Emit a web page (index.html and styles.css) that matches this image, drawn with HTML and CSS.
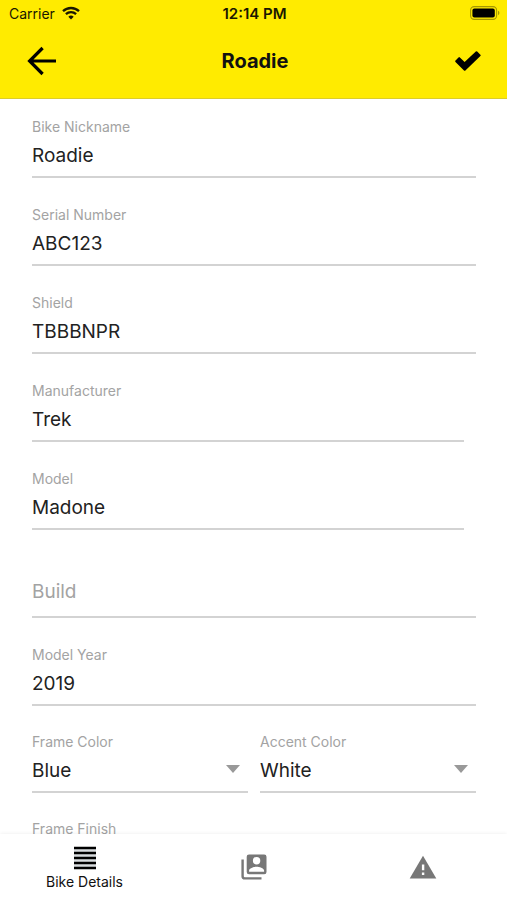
FILE: index.html
```html
<!DOCTYPE html>
<html lang="en">
<head>
<meta charset="utf-8">
<meta name="viewport" content="width=device-width, initial-scale=1">
<title>Roadie</title>
<link rel="stylesheet" href="styles.css">
</head>
<body>
<header class="header">
  <div class="status">
    <div class="carrier">
      <span>Carrier</span>
      <svg width="18" height="14" viewBox="0 0 18 14" fill="none" stroke="#1a1800" stroke-width="2.3" aria-hidden="true">
        <path d="M1 5.2A11.6 11.6 0 0 1 17 5.2"/>
        <path d="M3.9 8.2A7.4 7.4 0 0 1 14.1 8.2"/>
        <path d="M9 13.4L6.3 10.7A3.9 3.9 0 0 1 11.7 10.7Z" fill="#1a1800" stroke="none"/>
      </svg>
    </div>
    <time class="clock">12:14 PM</time>
    <svg class="battery" width="30" height="14" viewBox="0 0 30 14" aria-hidden="true">
      <rect x=".6" y=".6" width="26" height="12.8" rx="3.6" fill="none" stroke="#a59800" stroke-width="1.1"/>
      <rect x="2.4" y="2.4" width="22.4" height="9.2" rx="2" fill="#000"/>
      <path d="M28 4.8a2.4 2.4 0 0 1 0 4.4z" fill="#a59800"/>
    </svg>
  </div>
  <div class="bar">
    <button class="icon-button" type="button" aria-label="Back">
      <svg width="30" height="30" viewBox="0 0 30 30" fill="none" stroke="#000" stroke-width="3.2" aria-hidden="true">
        <path d="M29 15H3M15.6 2L2.6 15L15.6 28"/>
      </svg>
    </button>
    <h1 class="title">Roadie</h1>
    <button class="icon-button" type="button" aria-label="Save">
      <svg width="26" height="20" viewBox="0 0 26 20" aria-hidden="true">
        <path d="M.5 9.500L3.500 6.400Q4.200 5.800 4.900 6.400L9.600 11.100L20.800.6Q21.500 0 22.200.6L25.400 3.700Q26 4.400 25.400 5.100L10.400 19.400Q9.700 20 9 19.400L.5 11Q-.1 10.200.5 9.500z" fill="#000"/>
      </svg>
    </button>
  </div>
</header>
<main class="content">
  <form class="form">
    <div class="field">
      <label for="nickname">Bike Nickname</label>
      <input id="nickname" type="text" value="Roadie">
    </div>
    <div class="field">
      <label for="serial">Serial Number</label>
      <input id="serial" type="text" value="ABC123">
    </div>
    <div class="field">
      <label for="shield">Shield</label>
      <input id="shield" type="text" value="TBBBNPR">
    </div>
    <div class="field field-inset">
      <label for="manufacturer">Manufacturer</label>
      <input id="manufacturer" type="text" value="Trek">
    </div>
    <div class="field field-inset">
      <label for="model">Model</label>
      <input id="model" type="text" value="Madone">
    </div>
    <div class="field field-empty">
      <input id="build" type="text" placeholder="Build" aria-label="Build">
    </div>
    <div class="field">
      <label for="year">Model Year</label>
      <input id="year" type="text" value="2019">
    </div>
    <div class="choices">
      <div class="field">
        <label for="frame-color">Frame Color</label>
        <div class="select">
          <select id="frame-color"><option>Blue</option></select>
          <svg class="caret" width="14" height="8" viewBox="0 0 14 8" aria-hidden="true"><path d="M0 0h14L7 8z" fill="#999"/></svg>
        </div>
      </div>
      <div class="field">
        <label for="accent-color">Accent Color</label>
        <div class="select">
          <select id="accent-color"><option>White</option></select>
          <svg class="caret" width="14" height="8" viewBox="0 0 14 8" aria-hidden="true"><path d="M0 0h14L7 8z" fill="#999"/></svg>
        </div>
      </div>
      <div class="field">
        <label for="finish">Frame Finish</label>
        <input id="finish" type="text">
      </div>
    </div>
  </form>
</main>
<nav class="tabs">
  <a class="tab tab-current" href="#details" aria-current="page">
    <svg width="24" height="24" viewBox="0 0 24 24" aria-hidden="true">
      <path d="M1 1h22v22H1z" fill="#d8dcdf"/>
      <path d="M1 2h22M1 7h22M1 12h22M1 17h22M1 22h22" stroke="#000" stroke-width="2.4"/>
    </svg>
    <span>Bike Details</span>
  </a>
  <a class="tab" href="#owner" aria-label="Owner">
    <svg width="26" height="26" viewBox="0 0 26 26" aria-hidden="true">
      <path d="M1.6 5.5V22.2Q1.6 24.4 3.8 24.4H20.5" fill="none" stroke="#777" stroke-width="2.4"/>
      <path fill="#777" fill-rule="evenodd" d="M8 .5h15.200a2.300 2.300 0 0 1 2.300 2.300V18a2.300 2.300 0 0 1-2.300 2.300H8A2.300 2.300 0 0 1 5.700 18V2.800A2.300 2.300 0 0 1 8 .5zM15.600 3a3.700 3.700 0 1 0 0 7.400a3.700 3.700 0 0 0 0-7.400zM8.100 17.800h15v-1.200c0-2.500-5-3.900-7.500-3.900s-7.500 1.400-7.500 3.900z"/>
    </svg>
  </a>
  <a class="tab" href="#alerts" aria-label="Alerts">
    <svg width="28" height="24" viewBox="0 0 28 24" aria-hidden="true">
      <path d="M14 .8L27.300 23.400H.7z" fill="#777"/>
      <path d="M12.900 9.500h2.400v5.700h-2.400zM12.900 17.400h2.400v2.500h-2.400z" fill="#fff"/>
    </svg>
  </a>
</nav>
</body>
</html>
```
FILE: styles.css
```css
* {
  box-sizing: border-box;
}

body {
  display: flex;
  flex-direction: column;
  height: 100vh;
  margin: 0;
  background: #fff;
  color: #222;
  font-family: Inter, "Liberation Sans", sans-serif;
}

.header {
  flex: none;
  padding-bottom: 12px;
  background: #ffeb00;
  border-bottom: 1px solid #dccd2a;
}

.status {
  display: grid;
  grid-template-columns: 1fr auto 1fr;
  align-items: center;
  height: 28px;
  padding: 0 7px 0 9px;
  color: #1a1800;
  font-size: 14px;
  line-height: 20px;
}

.carrier {
  display: flex;
  align-items: center;
  gap: 7px;
}

.carrier svg {
  margin-bottom: 2px;
}

.clock {
  font-size: 15px;
  font-weight: 600;
}

.battery {
  justify-self: end;
  margin-bottom: 2px;
}

.bar {
  display: flex;
  align-items: center;
  justify-content: space-between;
  height: 58px;
  padding: 8px 17px 0 20px;
}

.icon-button {
  display: flex;
  align-items: center;
  justify-content: center;
  width: 44px;
  height: 44px;
  padding: 0;
  border: 0;
  background: none;
}

.title {
  margin: 0;
  color: #111;
  font-size: 20px;
  font-weight: 700;
  line-height: 28px;
}

.content {
  flex: 1;
  min-height: 0;
  overflow-y: auto;
  scrollbar-width: none;
}

.form {
  padding: 18px 31px 0 32px;
}

.field {
  margin-bottom: 27px;
}

.field-inset {
  margin-right: 12px;
}

.field label {
  display: block;
  color: #a3a3a3;
  font-size: 14px;
  line-height: 20px;
}

.field input,
.field select {
  display: block;
  width: 100%;
  height: 41px;
  margin: 0;
  padding: 0 0 3px;
  border: 0;
  border-bottom: 2px solid #d3d3d3;
  border-radius: 0;
  outline: 0;
  background: none;
  color: #222;
  font: inherit;
  font-size: 19px;
  appearance: none;
}

.field-empty input {
  height: 61px;
  padding: 9px 0 0;
}

.field input::placeholder {
  color: #a3a3a3;
  opacity: 1;
}

.choices {
  display: grid;
  grid-template-columns: 1fr 1fr;
  column-gap: 12px;
  margin-top: -1px;
}

.choices .field {
  margin-bottom: 26px;
}

.select {
  position: relative;
}

.caret {
  position: absolute;
  top: 13px;
  right: 8px;
  pointer-events: none;
}

.tabs {
  display: grid;
  flex: none;
  grid-template-columns: repeat(3, 1fr);
  height: 66px;
  background: #fff;
  box-shadow: 0 0 4px rgba(0, 0, 0, 0.08);
}

.tab {
  display: flex;
  flex-direction: column;
  align-items: center;
  justify-content: center;
  gap: 2px;
  color: #111;
  font-size: 14px;
  line-height: 20px;
  text-decoration: none;
}

.tab-current {
  padding-top: 4px;
}
```
